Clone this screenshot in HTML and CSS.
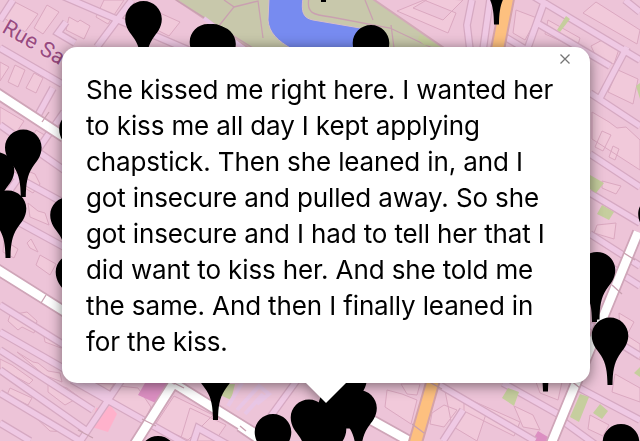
FILE: index.html
```
<!DOCTYPE html>
<html lang="en">
<head>
    <meta charset="UTF-8">
    <meta name="viewport" content="width=device-width, initial-scale=1.0">
    <title>Map</title>
    <link rel="stylesheet" href="styles.css">
</head>
<body>
    <div class="map">
        <svg class="map-canvas" viewBox="0 0 640 441" width="640" height="441">
            <defs>
                <path id="pin" d="M0 0C-10 0-18.3 8-18.3 18C-18.3 27-13 32-9 38C-4 46-2.7 54-2.5 67.5H2.5C2.7 54 4 46 9 38C13 32 18.3 27 18.3 18C18.3 8 10 0 0 0Z"/>
                <path id="streets" d="M0 48L62 84M-5 -33L200 55M66 22L58 33L75 43M53 88L37 117M132 0L97 47M13 0L0 20M0 125L64 170M0 168L64 203M0 212L64 247M64 112L10 190M0 305L64 345M0 332L110 395M0 350L93 410M0 370L87 431M0 393L80 441M0 423L30 441M125 375L77 446M72 380L150 424L200 452M472 0L467 25L470 50M490 0L483 50M545 0L527 50M533 -4L640 60M537 23L610 66M590 93L640 126M505 37L530 52M627 47L600 98M590 154L640 187M590 193L640 223M590 234L640 266M612 268L640 286M590 325L640 356M570 383L640 420M560 419L600 448M436 383L535 441M463 410L443 441M503 383L558 414M300 376L268 420M192 446L198 428L230 446M625 0L640 12"/>
                <path id="avenues" d="M-5 92L64 137M-5 268L70 315M175 384L270 443M173 384L135 444M638 232L551 444M366 417L420 447M240 426L265 443"/>
                <path id="orange" d="M508 -4L497 52M434 378L415 444"/>
            </defs>

            <rect width="640" height="441" fill="#edc4d8"/>

            <!-- blocks -->
            <g fill="#f1c9da" stroke="#dba8c0" stroke-width="1">
                <path d="M13 1L38 14L25 32L4 18ZM47 5L59 12L43 34L34 28ZM69 17L78 22L80 20L90 26L84 39L66 30ZM104 0L124 0L108 24L96 17ZM15 65L25 70L18 87L8 82ZM34 73L43 78L36 93L26 88ZM0 62L9 67L0 81ZM142 5L180 22L169 36L125 14ZM0 107L24 121L14 136L0 128Z"/>
                <path d="M36 130L48 137L42 150L30 142ZM25 170L35 174L40 184L33 193L20 185ZM28 203L38 211L45 213L49 225L30 217ZM4 240L18 249L14 258L3 252ZM31 239L38 252L30 248L27 243ZM40 255L56 264L50 275L36 265Z"/>
                <path d="M10 315L27 312L37 321L34 333L22 327L18 330L8 321ZM43 331L56 339L61 348L45 342ZM17 352L33 362L38 363L48 371L60 373L62 382L44 375ZM48 382L67 388L79 397L88 406L74 400L65 405L48 392ZM10 388L32 398L28 405L7 395ZM32 414L54 425L66 432L50 431ZM0 359L12 365L33 380L29 384L0 368Z"/>
                <path d="M90 383L114 384L103 400L88 392ZM119 386L138 388L151 407L145 420L108 400ZM174 396L213 415L188 440L155 425ZM190 408L226 425L215 441L180 441Z"/>
                <path d="M387 390L402 394L417 400L411 424L385 407ZM401 384L420 384L417 395L407 394ZM445 391L486 414L477 441L452 426ZM464 397L520 422L514 436L464 411ZM432 413L444 405L457 410L444 427L430 424ZM514 406L533 415L540 430L523 427ZM536 382L562 382L558 400L540 393Z"/>
                <path d="M516 10L537 18L525 40L513 33ZM591 46L608 37L620 46L614 64L598 61ZM596 2L640 30L637 44L583 13ZM548 20L580 38L577 48L545 34ZM618 70L638 79L633 104L608 92ZM443 20L463 0L430 -2L413 8ZM424 0L456 13L448 33L397 11Z"/>
                <path d="M592 112L609 122L617 128L626 127L640 140L640 170L592 139ZM602 131L611 135L603 151L595 147ZM613 146L619 149L615 160L609 157ZM602 181L621 186L616 194L602 188ZM597 225L616 223L614 239L594 233ZM619 313L634 322L628 333L620 330ZM626 335L640 344V360L624 350ZM590 415L609 425L603 436L588 429ZM615 374L640 388L640 402L612 392Z"/>
            </g>
            <path d="M96 408L111 406L117 414L112 424L108 432L92 427Z" fill="#ffb1cb"/>
            <path d="M145 383L168 383L160 405L138 395ZM538 431L548 437L546 441H532Z" fill="#dc8fc2"/>

            <!-- canal bank streets, drawn under the park -->
            <use class="street-edge" href="#streets"/>
            <use class="street" href="#streets"/>

            <!-- park and canal -->
            <path d="M172 -3L370 -3L447 50H252L208 21Z" fill="#c8c8ab" stroke="#d3a9b8" stroke-width="2"/>
            <path d="M269 -2L268 20C269 33 278 41 292 49H370L366 29L313 20C303 18 301 12 303 -2Z" fill="#778bf0" stroke="#d8bfc6" stroke-width="1"/>
            <path class="footpath" d="M176 0L253 48M224 0L234 7L218 27M234 7L258 1L263 38M309 -2C306 13 313 15 331 17L390 28L445 54M365 0L373 20M391 25L394 48"/>
            <path d="M560 32L570 19L566 16L557 30ZM636 86L640 83V99ZM590 175L604 183L596 193L590 189ZM602 205L614 212L609 220L597 214ZM210 384L235 384L231 400L218 394ZM508 388L519 392L514 406L502 398ZM580 394L589 397L579 422L570 417ZM600 404L608 411L602 419L593 413ZM420 34L440 47L424 45L418 39ZM640 367L634 373L640 377Z" fill="#c6ce9e"/>

            <path class="walk" d="M228 406L242 383M237 410L259 386L269 394L257 404M245 414L263 394M204 18L246 50"/>
            <use class="avenue-edge" href="#avenues"/>
            <use class="avenue" href="#avenues"/>
            <use class="orange-edge" href="#orange"/>
            <use class="orange" href="#orange"/>
            <path class="crossing" d="M42 122L49 112M41 303L46 295M612 285L622 294M624 253L635 260M168 380L184 388M570 380L580 388M240 426L246 431M412 424L424 433M422 378L442 389M142 419L156 426M78 430L93 438"/>

            <text class="street-name" transform="translate(1 31.500) rotate(30)">Rue Sa</text>

            <g class="pins">
                <use href="#pin" x="143.500" y="1"/>
                <use href="#pin" x="208" y="24"/>
                <use href="#pin" x="213" y="24"/>
                <use href="#pin" x="217.500" y="26"/>
                <use href="#pin" x="371" y="25"/>
                <use href="#pin" x="496.500" y="-43"/>
                <use href="#pin" x="323.500" y="-65.500"/>
                <use href="#pin" x="23.300" y="129.500"/>
                <use href="#pin" x="-4" y="152"/>
                <use href="#pin" x="8" y="190.500"/>
                <use href="#pin" x="77.500" y="111"/>
                <use href="#pin" x="68.500" y="197"/>
                <use href="#pin" x="74" y="254"/>
                <use href="#pin" x="656.500" y="196"/>
                <use href="#pin" x="597" y="252"/>
                <use href="#pin" x="594.500" y="254.500"/>
                <use href="#pin" x="610" y="317.500"/>
                <use href="#pin" x="621" y="424"/>
                <use href="#pin" x="545.500" y="324"/>
                <use href="#pin" x="215.500" y="352.500"/>
                <use href="#pin" x="158" y="436"/>
                <use href="#pin" x="273" y="414"/>
                <use href="#pin" x="309" y="399.500"/>
                <use href="#pin" x="328" y="411"/>
                <use href="#pin" x="337" y="387"/>
                <use href="#pin" x="348.500" y="361"/>
                <use href="#pin" x="358.500" y="390"/>
            </g>
        </svg>

        <div class="popup">
            <div class="popup-content">
                <button class="popup-close" type="button" aria-label="Close">
                    <svg viewBox="0 0 10 10" width="10" height="10"><path d="M.5 .5L9.500 9.500M9.500 .5L.5 9.500"/></svg>
                </button>
                <p>
                    <span>She kissed me right here. I wanted her</span>
                    <span>to kiss me all day I kept applying</span>
                    <span>chapstick. Then she leaned in, and I</span>
                    <span>got insecure and pulled away. So she</span>
                    <span>got insecure and I had to tell her that I</span>
                    <span>did want to kiss her. And she told me</span>
                    <span>the same. And then I finally leaned in</span>
                    <span>for the kiss.</span>
                </p>
            </div>
            <svg class="popup-tip" viewBox="0 0 42 21" width="42" height="21"><path d="M0 0H42L21 21Z"/></svg>
        </div>
    </div>
</body>
</html>
```
FILE: styles.css
```
body {
    margin: 0;
    font-family: Inter, "Liberation Sans", sans-serif;
}
.map {
    position: relative;
    width: 640px;
    height: 441px;
    overflow: hidden;
    background: #edc4d8;
}
.map-canvas {
    display: block;
}
.street, .street-edge, .avenue, .avenue-edge, .orange, .orange-edge, .walk, .crossing, .footpath {
    fill: none;
}
.street-edge {
    stroke: #d6a9c2;
    stroke-width: 8px;
}
.street {
    stroke: #efc9e4;
    stroke-width: 5.5px;
}
.avenue-edge {
    stroke: #cfa5b8;
    stroke-width: 12px;
}
.avenue {
    stroke: #ffffff;
    stroke-width: 8.5px;
}
.orange-edge {
    stroke: #d5a3a8;
    stroke-width: 15px;
}
.orange {
    stroke: #fdc07f;
    stroke-width: 11px;
}
.walk {
    stroke: #e8c6e5;
    stroke-width: 4px;
}
.crossing, .footpath {
    stroke: #c9a0b0;
    stroke-width: 1.3px;
}
.street-name {
    font-family: Roboto, sans-serif;
    font-size: 21.5px;
    letter-spacing: 0.3px;
    fill: #984a80;
    stroke: #efc9dd;
    stroke-width: 2px;
    paint-order: stroke;
}
.pins {
    fill: #000000;
}
.popup {
    position: absolute;
    left: 62px;
    top: 47px;
    width: 528px;
    filter: drop-shadow(0 2px 7px rgba(0, 0, 0, 0.5));
}
.popup-content {
    height: 336px;
    padding: 25px 24px;
    box-sizing: border-box;
    border-radius: 15px;
    background: #ffffff;
}
.popup-content p {
    margin: 0;
    font-size: 26px;
    line-height: 36px;
    letter-spacing: -0.13px;
    color: #000000;
}
.popup-content span {
    display: block;
    white-space: nowrap;
}
.popup-close {
    position: absolute;
    top: 7px;
    right: 20px;
    padding: 0;
    border: none;
    background: none;
    line-height: 0;
    cursor: pointer;
}
.popup-close path {
    stroke: #757575;
    stroke-width: 1.3px;
}
.popup-tip {
    display: block;
    margin: -1px auto 0;
    fill: #ffffff;
}
```
